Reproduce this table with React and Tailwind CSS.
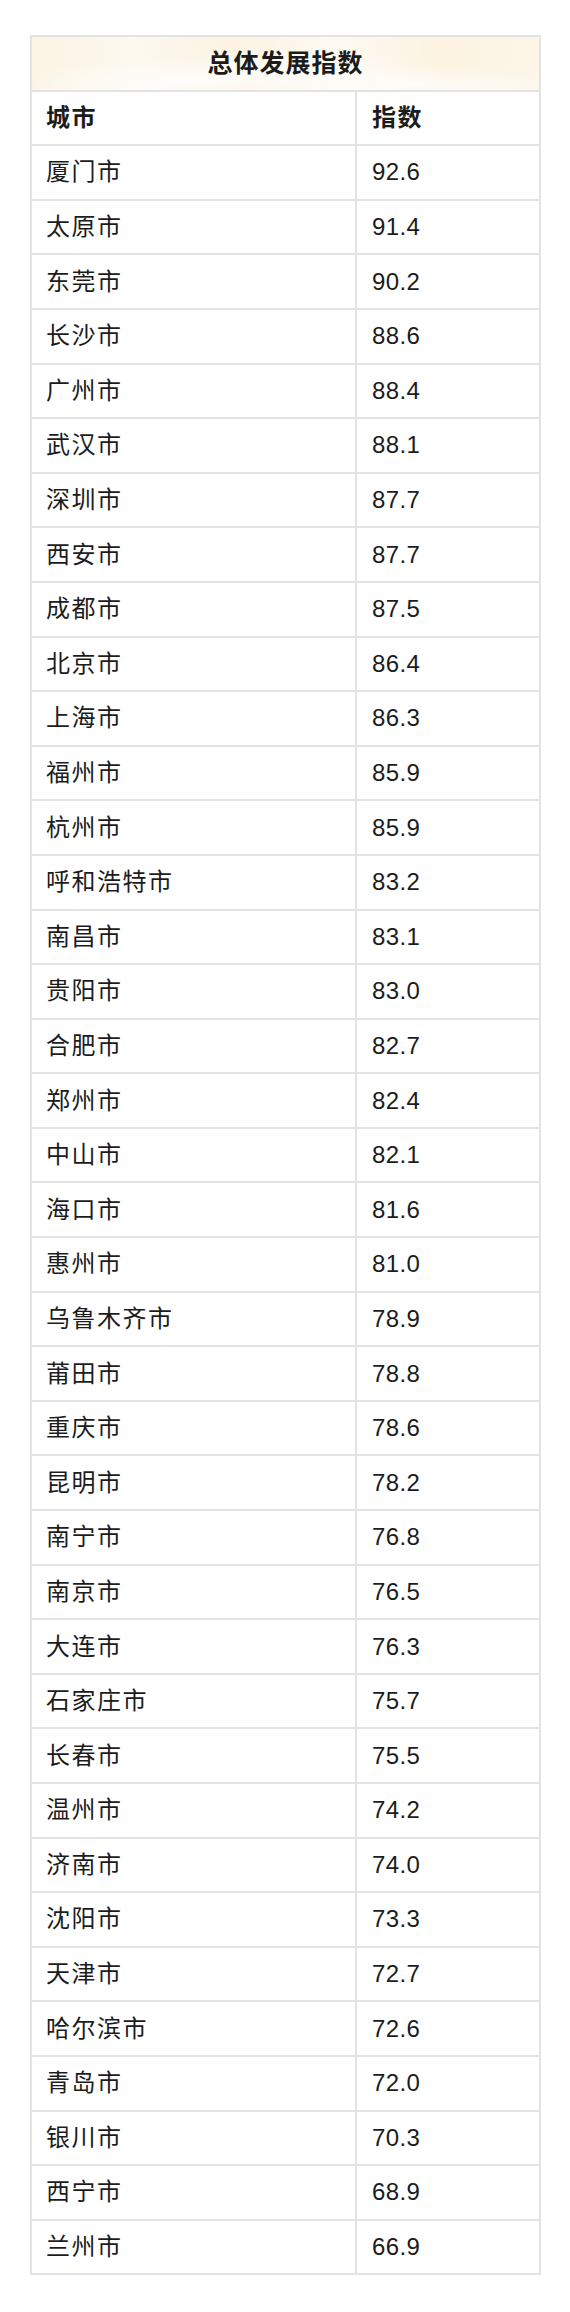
import React from "react";

const rows = [
  ["厦门市", "92.6"],
  ["太原市", "91.4"],
  ["东莞市", "90.2"],
  ["长沙市", "88.6"],
  ["广州市", "88.4"],
  ["武汉市", "88.1"],
  ["深圳市", "87.7"],
  ["西安市", "87.7"],
  ["成都市", "87.5"],
  ["北京市", "86.4"],
  ["上海市", "86.3"],
  ["福州市", "85.9"],
  ["杭州市", "85.9"],
  ["呼和浩特市", "83.2"],
  ["南昌市", "83.1"],
  ["贵阳市", "83.0"],
  ["合肥市", "82.7"],
  ["郑州市", "82.4"],
  ["中山市", "82.1"],
  ["海口市", "81.6"],
  ["惠州市", "81.0"],
  ["乌鲁木齐市", "78.9"],
  ["莆田市", "78.8"],
  ["重庆市", "78.6"],
  ["昆明市", "78.2"],
  ["南宁市", "76.8"],
  ["南京市", "76.5"],
  ["大连市", "76.3"],
  ["石家庄市", "75.7"],
  ["长春市", "75.5"],
  ["温州市", "74.2"],
  ["济南市", "74.0"],
  ["沈阳市", "73.3"],
  ["天津市", "72.7"],
  ["哈尔滨市", "72.6"],
  ["青岛市", "72.0"],
  ["银川市", "70.3"],
  ["西宁市", "68.9"],
  ["兰州市", "66.9"],
];

const Row = ({ city, value, bold }) => (
  <div className="flex h-[54.6px] border-b-2 border-[#e3e3e3]">
    <div
      className={`w-[325px] flex items-center pl-[14px] border-r-2 border-[#e3e3e3] tracking-[1.5px] ${
        bold ? "font-bold" : ""
      }`}
    >
      {city}
    </div>
    <div
      className={`flex-1 flex items-center pl-[15px] ${
        bold ? "font-bold tracking-[1.5px]" : "tracking-[0.4px]"
      }`}
    >
      {value}
    </div>
  </div>
);

export default function App() {
  return (
    <div className="w-[570px] min-h-[2312px] bg-white pt-[35px] pl-[30px] text-[#1c1c1c] font-['Liberation_Sans','Noto_Sans_CJK_SC',sans-serif] text-[24px]">
      <div className="w-[511px] border-t-2 border-l-2 border-r-2 border-[#e3e3e3]">
        {/* Title */}
        <div className="h-[54.6px] border-b-2 border-[#e3e3e3] flex items-center justify-center font-bold text-[25px] tracking-[1px] bg-[radial-gradient(ellipse_at_30%_85%,rgba(255,255,255,0.8),transparent_35%),radial-gradient(ellipse_at_75%_90%,rgba(255,255,255,0.8),transparent_30%),radial-gradient(ellipse_at_50%_60%,rgba(255,255,255,0.6),transparent_45%),linear-gradient(90deg,#fcf4e4,#fdf9ef_20%,#fcf3e2_40%,#fefaf2_60%,#fcf3e1_80%,#fdf6e8)]">
          总体发展指数
        </div>
        <Row city="城市" value="指数" bold />
        {rows.map(([city, value]) => (
          <Row key={city} city={city} value={value} />
        ))}
      </div>
    </div>
  );
}
